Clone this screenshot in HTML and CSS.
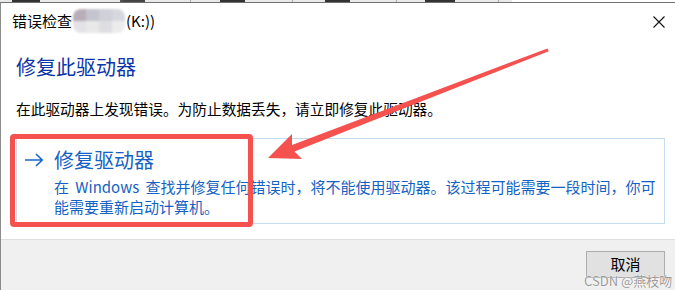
FILE: index.html
```html
<!DOCTYPE html>
<html lang="zh-CN">
<head>
<meta charset="utf-8">
<title>错误检查</title>
<link rel="stylesheet" href="styles.css">
</head>
<body>
<div class="screen">
  <div class="topstrip"></div>
  <div class="window">
    <div class="titlebar">
      <span class="title-text">错误检查</span>
      <span class="blur"><span class="c1"></span><span class="c2"></span><span class="c3"></span><span class="c4"></span><span class="c5"></span><span class="c6"></span><span class="c7"></span><span class="c8"></span></span>
      <span class="title-text">(K:))</span>
      <span class="close">
        <svg width="12" height="12" viewBox="0 0 12 12"><path d="M0.5 0.5 L11.5 11.5 M11.5 0.5 L0.5 11.5" stroke="#111" stroke-width="1.1" fill="none"/></svg>
      </span>
    </div>
    <div class="content">
      <h1 class="heading">修复此驱动器</h1>
      <p class="para">在此驱动器上发现错误。为防止数据丢失，请立即修复此驱动器。</p>
      <div class="cmdlink">
        <span class="arrow">
          <svg width="20" height="14" viewBox="0 0 20 14"><path d="M1 7 H18 M12 1 L18.2 7 L12 13" stroke="#1766c9" stroke-width="1.6" fill="none"/></svg>
        </span>
        <div class="cmd-text">
          <div class="cmd-title">修复驱动器</div>
          <div class="cmd-desc">在 Windows 查找并修复任何错误时，将不能使用驱动器。该过程可能需要一段时间，你可<br>能需要重新启动计算机。</div>
        </div>
      </div>
    </div>
    <div class="footer">
      <button class="btn">取消</button>
    </div>
  </div>
  <div class="redbox"></div>
  <svg class="redarrow" width="675" height="290" viewBox="0 0 675 290">
    <polygon points="268,158 292,134 292,145 547.4,48.4 548.8,51.2 294.5,151.6 302,159" fill="#f5524f"/>
  </svg>
  <div class="watermark">CSDN @燕枝吻</div>
</div>
</body>
</html>
```

FILE: styles.css
```css
html, body {
  margin: 0;
  padding: 0;
  background: #ffffff;
}
.screen {
  position: relative;
  width: 675px;
  height: 290px;
  overflow: hidden;
  font-family: "Noto Sans CJK SC", "Microsoft YaHei", sans-serif;
  color: #000;
}
.topstrip {
  height: 2px;
  background: linear-gradient(90deg, #e9e9e9 0, #e9e9e9 12px, #333 12px, #333 40px, #e9e9e9 40px, #e9e9e9 120px, #555 120px, #555 122px, #444 124px, #444 145px, #e9e9e9 145px, #e9e9e9 190px, #aaa 190px, #aaa 191px, #e9e9e9 191px, #e9e9e9 220px, #333 220px, #333 245px, #e9e9e9 245px, #e9e9e9 292px, #aaa 292px, #aaa 293px, #e9e9e9 293px, #e9e9e9 325px, #333 325px, #333 350px, #e9e9e9 350px, #e9e9e9 396px, #aaa 396px, #aaa 397px, #e9e9e9 397px, #e9e9e9 425px, #333 425px, #333 455px, #e9e9e9 455px, #e9e9e9 498px, #aaa 498px, #aaa 499px, #e9e9e9 499px, #e9e9e9 512px, #fff 512px);
}
.window {
  height: 288px;
  border-top: 1px solid #707070;
  border-left: 1px solid #8c8c8c;
  display: flex;
  flex-direction: column;
  background: #fff;
}
.titlebar {
  height: 36px;
  display: flex;
  align-items: center;
  padding-left: 11px;
  font-size: 15px;
  line-height: 20px;
}
.title-text {
  white-space: nowrap;
}
.blur {
  display: grid;
  grid-template-columns: repeat(4, 13px);
  grid-template-rows: 12px 12px;
  width: 52px;
  height: 24px;
  margin: 0 1px 0 1px;
  border-radius: 8px;
  overflow: hidden;
  filter: blur(1.2px);
}
.blur span { display: block; }
.c1 { background: #b8aeb8; }
.c2 { background: #c6c4ce; }
.c3 { background: #cfd0d8; }
.c4 { background: #d6d8de; }
.c5 { background: #e4e2e6; }
.c6 { background: #e9e9e9; }
.c7 { background: #dedee2; }
.c8 { background: #ececec; }
.close {
  margin-left: auto;
  margin-right: 10px;
  display: flex;
  align-items: center;
  height: 12px;
  margin-top: 1px;
}
.content {
  padding: 0 10px 0 15px;
}
.heading {
  margin: 14px 0 0 0;
  font-size: 20px;
  font-weight: normal;
  line-height: 28px;
  color: #0b35a8;
}
.para {
  margin: 18px 0 0 0;
  font-size: 14.7px;
  line-height: 20px;
}
.cmdlink {
  margin-top: 19px;
  border: 1px solid #c3dcf2;
  display: flex;
  padding: 8px 0 6px 7px;
  height: 86px;
  box-sizing: border-box;
}
.arrow {
  width: 20px;
  height: 26px;
  display: flex;
  align-items: center;
  margin-right: 10px;
}
.cmd-title {
  font-size: 20px;
  line-height: 26px;
  color: #1462c3;
}
.cmd-desc {
  margin-top: 4px;
  font-size: 15px;
  line-height: 20px;
  color: #1462c3;
  word-spacing: 3px;
  white-space: nowrap;
}
.footer {
  margin-top: 15px;
  border-top: 1px solid #dfdfdf;
  background: #f0f0f0;
  flex: 1;
  display: flex;
  justify-content: flex-end;
  align-items: flex-start;
  padding: 11px 10px 0 0;
}
.btn {
  width: 79px;
  height: 27px;
  background: #e1e1e1;
  border: 1px solid #adadad;
  font-family: "Noto Sans CJK SC", "Microsoft YaHei", sans-serif;
  font-size: 15px;
  line-height: 15px;
  color: #000;
  padding: 0 0 3px 0;
  margin: 0;
}
.redbox {
  position: absolute;
  left: 10px;
  top: 134px;
  width: 243px;
  height: 93px;
  box-sizing: border-box;
  border: 5px solid #f5524f;
  border-radius: 4px;
}
.redarrow {
  position: absolute;
  left: 0;
  top: 0;
}
.watermark {
  position: absolute;
  left: 584px;
  top: 274px;
  font-family: "Noto Sans CJK SC", sans-serif;
  font-size: 13px;
  line-height: 13px;
  color: #9a9a9a;
  text-shadow: 0 0 1px #fff, 0 0 1px #fff;
  white-space: nowrap;
}
```
